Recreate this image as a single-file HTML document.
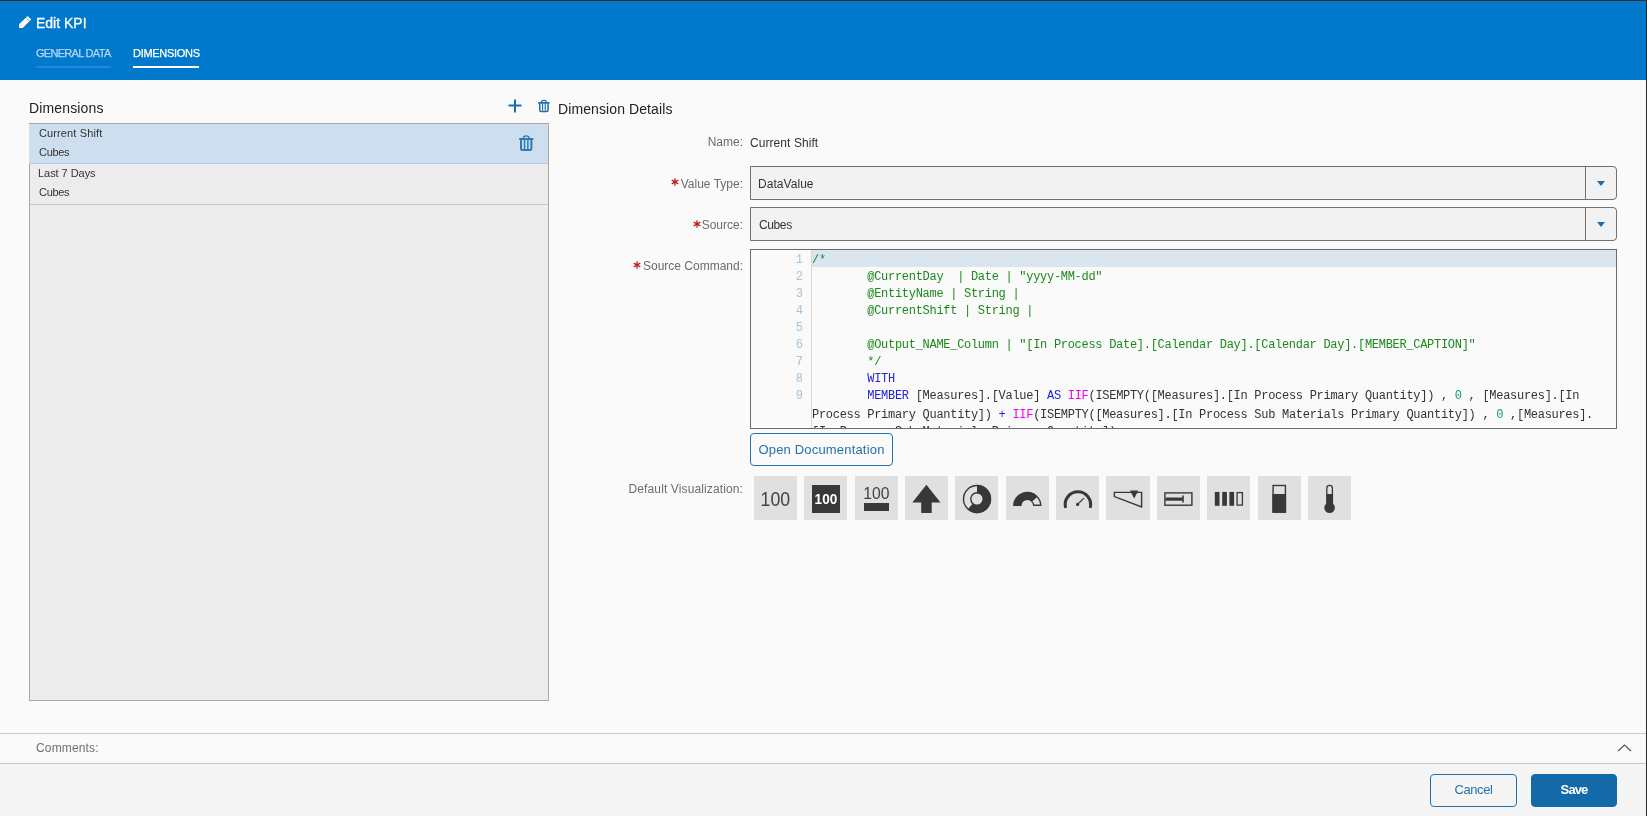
<!DOCTYPE html>
<html><head><meta charset="utf-8">
<style>
*{box-sizing:border-box;margin:0;padding:0}
html,body{width:1647px;height:816px;overflow:hidden;background:#fafafa;font-family:"Liberation Sans",sans-serif;}
.abs{position:absolute}
.title,.tab,.h2,.row .t,.lbl,.val,.dd .v,.code,.ln,.btn,svg{will-change:transform}
#topline{left:0;top:0;width:1647px;height:1px;background:#3a2c22}
#rightline{left:1646px;top:0;width:1px;height:816px;background:#2b2b2b}
#header{left:0;top:1px;width:1646px;height:79px;background:#0078cc}
.title{left:36px;top:14px;color:#fff;-webkit-text-stroke:0.3px #fff;font-size:14px;line-height:18px;white-space:nowrap}
.tab{top:46px;font-size:11px;line-height:14px;white-space:nowrap}
.tab1{left:36px;color:#b6d6f0;letter-spacing:-0.7px;-webkit-text-stroke:0.25px #b6d6f0}
.tab2{left:133px;color:#fff;letter-spacing:-0.3px;-webkit-text-stroke:0.25px #fff}
.ul1{left:36px;top:66px;width:75px;height:2px;background:#2787d6}
.ul2{left:133px;top:66px;width:66px;height:2px;background:#fff}
.h2{font-size:14px;line-height:18px;color:#222;white-space:nowrap}
#list{left:29px;top:123px;width:520px;height:578px;background:#ececec;border:1px solid #a9a9a9}
.row{position:absolute;left:0;width:518px;height:40px;border-bottom:1px solid #c8c8c8}
.row .t{position:absolute;left:9px;font-size:11px;line-height:14px;color:#333;white-space:nowrap}
.lbl{font-size:12px;line-height:15px;color:#6c6c6c;white-space:nowrap;text-align:right}
.req{color:#c0392b}
.val{font-size:12px;line-height:15px;color:#333;white-space:nowrap}
.dd{left:750px;width:867px;height:34px;background:#f2f2f2;border:1px solid #707070;border-radius:0 4px 4px 0}
.dd .sep{position:absolute;left:834px;top:0;width:1px;height:32px;background:#707070}
.dd .arr{position:absolute;left:846px;top:14px;width:0;height:0;border-left:4.5px solid transparent;border-right:4.5px solid transparent;border-top:5px solid #1a6eb0}
.dd .v{position:absolute;left:8px;top:10px;font-size:12px;line-height:15px;color:#333;white-space:nowrap}
#editor{left:750px;top:249px;width:867px;height:180px;border:1px solid #6b6b6b;background:#fafafa;overflow:hidden}
.gut{position:absolute;left:0;top:0;width:61px;height:178px;border-right:1px solid #d8d8d8}
.hl{position:absolute;left:61px;top:0;width:804px;height:17px;background:#dae6ef}
.ln{position:absolute;left:0;width:52px;text-align:right;font-family:"Liberation Mono",monospace;font-size:12px;line-height:17px;color:#a3c4db}
.code{position:absolute;left:61px;top:0;font-family:"Liberation Mono",monospace;font-size:12px;letter-spacing:-0.29px;line-height:17px;color:#333;white-space:pre}
.cm{color:#1b8a1b}.kw{color:#2323e0}.fn{color:#ee00ee}.nm{color:#119977}
.btn{border:1px solid #1f72b0;border-radius:4px;color:#1f72b0;font-size:13px;white-space:nowrap;background:transparent;text-align:center}
.tile{top:476px;width:43px;height:44px;background:#e0e0e0}
#cbar{left:0;top:733px;width:1646px;height:31px;border-top:1px solid #c8c8c8;border-bottom:1px solid #c8c8c8;background:#fafafa}
#footer{left:0;top:764px;width:1646px;height:52px;background:#f5f5f5}
</style></head><body>
<div class="abs" id="header"></div>
<div class="abs" id="topline"></div>
<div class="abs" id="rightline"></div>
<svg class="abs" style="left:16px;top:13px" width="20" height="18" viewBox="16 13 20 18"><path d="M19.1 24.3 L27.6 15.9 L31.2 19.5 L22.7 28 L19.1 28 Z" fill="#fff"/><path d="M26.0 17.5 L29.6 21.1" stroke="#0078cc" stroke-width="0.7" opacity="0.8"/><path d="M20.9 25.2 L21.9 26.2" stroke="#0078cc" stroke-width="0.9" opacity="0.45"/></svg>
<div class="abs title">Edit KPI</div>
<div class="abs tab tab1">GENERAL DATA</div>
<div class="abs tab tab2">DIMENSIONS</div>
<div class="abs ul1"></div>
<div class="abs ul2"></div>

<div class="abs h2" style="left:29px;top:99px;letter-spacing:0.15px">Dimensions</div>
<svg class="abs" style="left:508px;top:99px" width="14" height="14" viewBox="0 0 14 14"><path d="M7 0.5V13.5M0.5 6.5H13.5" stroke="#1a6eb0" stroke-width="2"/></svg>

<div class="abs h2" style="left:558px;top:100px;letter-spacing:0.1px">Dimension Details</div>

<div class="abs" id="list">
  <div class="row" style="top:0;background:#cddfef;border-bottom:1px solid #b3cbe0;left:-1px;width:519px"><div class="t" style="top:2px;left:10px;letter-spacing:0.12px">Current Shift</div><div class="t" style="top:21px;left:10px;letter-spacing:-0.3px">Cubes</div>
  
  </div>
  <div class="row" style="top:40px;height:41px"><div class="t" style="top:2px;left:8px;letter-spacing:-0.05px">Last 7 Days</div><div class="t" style="top:21px;left:9px;letter-spacing:-0.3px">Cubes</div></div>
</div>

<div class="abs lbl" style="left:600px;top:135px;width:143px">Name:</div>
<div class="abs val" style="left:750px;top:136px;letter-spacing:0.07px">Current Shift</div>
<div class="abs lbl" style="left:600px;top:177px;width:143px">Value Type:</div><svg class="abs" style="left:670.4px;top:176.9px" width="10" height="10" viewBox="0 0 10 10"><path d="M5 1.2V8.8M1.7 3.1L8.3 6.9M1.7 6.9L8.3 3.1" stroke="#b82222" stroke-width="1.25"/></svg>
<div class="abs dd" style="top:166px"><div class="v" style="left:7px;letter-spacing:0.05px">DataValue</div><div class="sep"></div><div class="arr"></div></div>
<div class="abs lbl" style="left:600px;top:218px;width:143px">Source:</div><svg class="abs" style="left:691.7px;top:219px" width="10" height="10" viewBox="0 0 10 10"><path d="M5 1.2V8.8M1.7 3.1L8.3 6.9M1.7 6.9L8.3 3.1" stroke="#b82222" stroke-width="1.25"/></svg>
<div class="abs dd" style="top:207px"><div class="v" style="letter-spacing:-0.38px">Cubes</div><div class="sep"></div><div class="arr"></div></div>
<div class="abs lbl" style="left:560px;top:259px;width:183px">Source Command:</div><svg class="abs" style="left:631.8px;top:260px" width="10" height="10" viewBox="0 0 10 10"><path d="M5 1.2V8.8M1.7 3.1L8.3 6.9M1.7 6.9L8.3 3.1" stroke="#b82222" stroke-width="1.25"/></svg>

<div class="abs" id="editor">
  <div class="gut"></div>
  <div class="hl"></div>
  <div class="ln" style="top:2px">1</div>
  <div class="ln" style="top:19px">2</div>
  <div class="ln" style="top:36px">3</div>
  <div class="ln" style="top:53px">4</div>
  <div class="ln" style="top:70px">5</div>
  <div class="ln" style="top:87px">6</div>
  <div class="ln" style="top:104px">7</div>
  <div class="ln" style="top:121px">8</div>
  <div class="ln" style="top:138px">9</div>
  <div class="code" style="top:2px"><span class="cm">/*</span></div>
  <div class="code" style="top:19px"><span class="cm">        @CurrentDay  | Date | "yyyy-MM-dd"</span></div>
  <div class="code" style="top:36px"><span class="cm">        @EntityName | String |</span></div>
  <div class="code" style="top:53px"><span class="cm">        @CurrentShift | String |</span></div>
  <div class="code" style="top:70px"></div>
  <div class="code" style="top:87px"><span class="cm">        @Output_NAME_Column | "[In Process Date].[Calendar Day].[Calendar Day].[MEMBER_CAPTION]"</span></div>
  <div class="code" style="top:104px"><span class="cm">        */</span></div>
  <div class="code" style="top:121px">        <span class="kw">WITH</span></div>
  <div class="code" style="top:138px">        <span class="kw">MEMBER</span> [Measures].[Value] <span class="kw">AS</span> <span class="fn">IIF</span>(ISEMPTY([Measures].[In Process Primary Quantity]) , <span class="nm">0</span> , [Measures].[In</div>
  <div class="code" style="top:157px">Process Primary Quantity]) <span class="kw">+</span> <span class="fn">IIF</span>(ISEMPTY([Measures].[In Process Sub Materials Primary Quantity]) , <span class="nm">0</span> ,[Measures].</div>
  <div class="code" style="top:174px">[In Process Sub Materials Primary Quantity])</div>
</div>

<div class="abs btn" style="left:750px;top:433px;width:143px;height:33px;line-height:31px;letter-spacing:0.18px">Open Documentation</div>

<div class="abs lbl" style="left:560px;top:482px;width:183px;letter-spacing:0.12px">Default Visualization:</div>
<svg class="abs" style="left:0;top:0" width="1647" height="816" viewBox="0 0 1647 816">
<rect x="754" y="476" width="43" height="44" fill="#e0e0e0"/>
<rect x="804" y="476" width="43" height="44" fill="#e0e0e0"/>
<rect x="855" y="476" width="43" height="44" fill="#e0e0e0"/>
<rect x="905" y="476" width="43" height="44" fill="#e0e0e0"/>
<rect x="955" y="476" width="43" height="44" fill="#e0e0e0"/>
<rect x="1006" y="476" width="43" height="44" fill="#e0e0e0"/>
<rect x="1056" y="476" width="43" height="44" fill="#e0e0e0"/>
<rect x="1106" y="476" width="44" height="44" fill="#e0e0e0"/>
<rect x="1157" y="476" width="43" height="44" fill="#e0e0e0"/>
<rect x="1207" y="476" width="43" height="44" fill="#e0e0e0"/>
<rect x="1258" y="476" width="43" height="44" fill="#e0e0e0"/>
<rect x="1308" y="476" width="43" height="44" fill="#e0e0e0"/>
<text x="760.6" y="506.3" font-family="Liberation Sans" font-size="20" fill="#444" textLength="29.6" lengthAdjust="spacingAndGlyphs">100</text>
<rect x="812" y="485" width="28" height="28" fill="#383838"/>
<text x="814.6" y="504.2" font-family="Liberation Sans" font-weight="bold" font-size="14" fill="#fff" textLength="22.6" lengthAdjust="spacingAndGlyphs">100</text>
<text x="863.2" y="499" font-family="Liberation Sans" font-size="17" fill="#444" textLength="26.2" lengthAdjust="spacingAndGlyphs">100</text>
<rect x="864" y="503" width="25" height="8" fill="#383838"/>
<path d="M926.4 484.8 L940.5 502.5 L931.7 502.5 L931.7 513 L921.2 513 L921.2 502.5 L912.3 502.5 Z" fill="#383838"/>
<path d="M977.00 484.80 A14.2 14.2 0 1 1 967.50 509.55 L972.85 503.61 A6.2 6.2 0 1 0 977.00 492.80 Z" fill="#383838"/>
<circle cx="977" cy="499" r="13.5" fill="none" stroke="#383838" stroke-width="1.4"/>
<circle cx="977" cy="499" r="6.2" fill="none" stroke="#383838" stroke-width="1.4"/>
<path d="M1013.10 505.90 A14.2 14.2 0 0 1 1037.85 496.40 L1031.54 502.09 A5.7 5.7 0 0 0 1021.60 505.90 Z" fill="#383838"/>
<path d="M1037.37 496.83 A13.549999999999999 13.549999999999999 0 0 1 1040.85 505.25 L1033.65 505.25 A6.3500000000000005 6.3500000000000005 0 0 0 1032.02 501.65" fill="none" stroke="#383838" stroke-width="1.3"/>
<path d="M1065.63 507.79 A12.7 12.7 0 1 1 1090.17 507.79" fill="none" stroke="#383838" stroke-width="3"/>
<circle cx="1077.6" cy="504.4" r="1.6" fill="#383838"/>
<path d="M1077.6 504.4 L1083.9 498.1" stroke="#383838" stroke-width="1.3"/>
<path d="M1114.4 492.4 L1141.6 492.4 L1141.6 507 L1114.4 496.6 Z" fill="none" stroke="#383838" stroke-width="1.4" stroke-linejoin="miter"/>
<path d="M1130 490.6 L1138.4 490.6 L1134.2 498.6 Z" fill="#383838"/>
<rect x="1164.9" y="492.9" width="27" height="12.3" fill="none" stroke="#383838" stroke-width="1.4"/>
<rect x="1165.5" y="497.5" width="17" height="3.2" fill="#383838"/>
<rect x="1182.2" y="495.5" width="1.6" height="7" fill="#383838"/>
<rect x="1214.8" y="491.9" width="4.7" height="13.9" fill="#383838"/>
<rect x="1222.2" y="491.9" width="4.7" height="13.9" fill="#383838"/>
<rect x="1229.4" y="491.9" width="4.7" height="13.9" fill="#383838"/>
<rect x="1237.1" y="492.6" width="5.3" height="12.5" fill="none" stroke="#383838" stroke-width="1.3"/>
<rect x="1273.1" y="485.5" width="12.3" height="26.6" fill="none" stroke="#383838" stroke-width="1.4"/>
<rect x="1272.4" y="494" width="13.7" height="18.8" fill="#383838"/>
<path d="M1326.8 494 V488.2 A2.8 2.8 0 0 1 1332.4 488.2 V494" fill="none" stroke="#383838" stroke-width="1.3"/>
<rect x="1326.1" y="494" width="7" height="10" fill="#383838"/>
<circle cx="1329.6" cy="507.7" r="5.3" fill="#383838"/>
</svg>
<div class="abs" id="cbar"></div>
<div class="abs lbl" style="left:36px;top:741px;text-align:left;color:#707070;letter-spacing:0.15px">Comments:</div>
<svg class="abs" style="left:1610px;top:738px" width="30" height="20" viewBox="1610 738 30 20"><path d="M1618 751L1624.5 745L1631 751" stroke="#5a5a5a" stroke-width="1.2" fill="none"/></svg>
<div class="abs" id="footer"></div>
<div class="abs btn" style="left:1430px;top:774px;width:87px;height:33px;line-height:30px;letter-spacing:-0.4px">Cancel</div>
<div class="abs btn" style="left:1531px;top:774px;width:86px;height:33px;line-height:30px;background:#1469a8;border-color:#1469a8;color:#fff;font-weight:bold;letter-spacing:-0.9px">Save</div>
<svg class="abs" style="left:0;top:0" width="1647" height="816" viewBox="0 0 1647 816">
<path d="M541.40 102.30 V102.30 A2.50 2.00 0 0 1 546.40 102.30 V102.30" fill="none" stroke="#1f6fb0" stroke-width="1.2"/>
<rect x="538.20" y="102.00" width="11.40" height="1.80" fill="#1f6fb0"/>
<path d="M539.75 103.80 V109.95 Q539.75 111.45 541.25 111.45 H546.55 Q548.05 111.45 548.05 109.95 V103.80" fill="none" stroke="#1f6fb0" stroke-width="1.5"/>
<rect x="542.03" y="103.80" width="1.10" height="6.90" fill="#1f6fb0"/>
<rect x="544.67" y="103.80" width="1.10" height="6.90" fill="#1f6fb0"/>
<path d="M523.30 138.30 V138.20 A2.90 2.32 0 0 1 529.10 138.20 V138.30" fill="none" stroke="#2f7bb8" stroke-width="1.4"/>
<rect x="519.20" y="138.00" width="14.00" height="2.00" fill="#2f7bb8"/>
<path d="M521.00 140.00 V148.50 Q521.00 150.00 522.50 150.00 H529.90 Q531.40 150.00 531.40 148.50 V140.00" fill="none" stroke="#2f7bb8" stroke-width="2.0"/>
<rect x="523.80" y="140.00" width="1.50" height="9.00" fill="#2f7bb8"/>
<rect x="527.10" y="140.00" width="1.50" height="9.00" fill="#2f7bb8"/>
</svg>
</body></html>
